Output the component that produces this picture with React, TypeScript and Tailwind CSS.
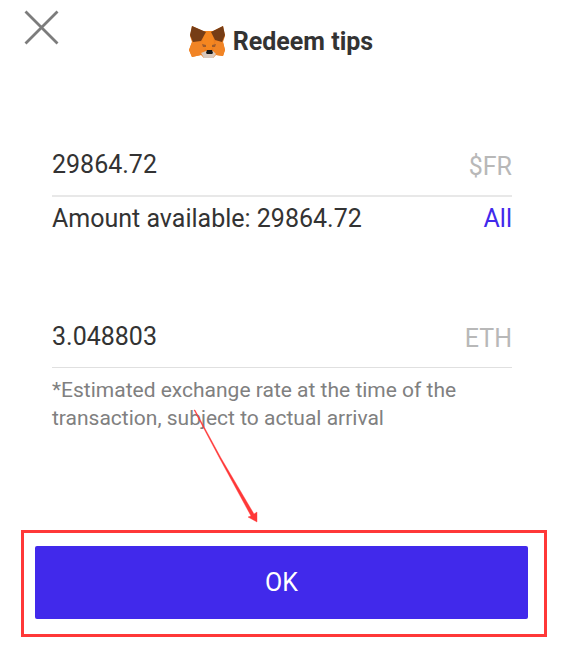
import { useState } from "react";

function FoxLogo() {
  return (
    <svg viewBox="0 0 36 34" className="h-[34px] w-9 shrink-0" role="img" aria-label="Fox">
      <path d="M3 1 L14 6 H24 L34 1 L36 11 L34 17 L36 25 L34 31 L27 30 L24 33 H15 L12 30 L3 32 L0 25 L3 17 L1 11 Z" fill="#ee7d1c" />
      <path d="M14 6 H24 L25 20 L22 25 H18 L13 20 Z" fill="#f5861f" />
      <path d="M3 17 L12 15 L16 24 L12 30 L3 32 L0 25 Z" fill="#f18425" />
      <path d="M34 17 L27 15 L24 24 L27 30 L34 31 L36 25 Z" fill="#f18425" />
      <path d="M3 1 L17 7 L12 16 L4 17 L1 10 Z" fill="#763d16" />
      <path d="M34 1 L22 7 L26 15 L33 17 L36 10 Z" fill="#763d16" />
      <path d="M12 28 L17 26 H24 L27 29 L24 33 H15 Z" fill="#d9c8bc" />
      <path d="M13 19 L17 20 V22 L14 22 Z" fill="#a05c2c" />
      <path d="M27 19 L23 20 V22 L26 22 Z" fill="#a05c2c" />
      <path d="M18 25 H23 L24 28 L23 29 H18 L17 28 Z" fill="#161616" />
    </svg>
  );
}

type FieldProps = {
  id: string;
  label: string;
  unit: string;
  value: string;
  onChange: (value: string) => void;
};

function AmountField({ id, label, unit, value, onChange }: FieldProps) {
  return (
    <div className="flex h-14 items-center pb-1">
      <input
        id={id}
        aria-label={label}
        inputMode="decimal"
        value={value}
        onChange={(event) => onChange(event.target.value)}
        className="h-8 min-w-0 flex-1 bg-transparent text-[25px] text-[#333333] outline-none"
      />
      <label htmlFor={id} className="pt-1 text-[25px] leading-8 text-[#b8b8b8]">
        {unit}
      </label>
    </div>
  );
}

export default function App() {
  const available = "29864.72";
  const [amount, setAmount] = useState(available);
  const [received, setReceived] = useState("3.048803");

  return (
    <main className="w-full bg-white pb-7 font-[Roboto,sans-serif] text-[#333333]">
      <header className="relative flex h-[84px] items-center justify-center pr-0.5">
        <button type="button" aria-label="Close" className="absolute top-2 left-6 h-[38px] w-9">
          <svg viewBox="0 0 36 38" className="h-full w-full" fill="none" stroke="#7c7c7c" strokeWidth="2.8">
            <path d="M1.5 3.5 L33.5 35.5 M33.5 3.5 L1.5 35.5" />
          </svg>
        </button>
        <h1 className="flex items-center gap-2 text-[25px] leading-8 font-bold">
          <FoxLogo />
          Redeem tips
        </h1>
      </header>

      <section className="px-[52px] pt-[55px]">
        <div className="border-b-2 border-[#e8e8e8]">
          <AmountField id="redeem" label="Redeem amount" unit="$FR" value={amount} onChange={setAmount} />
        </div>
        <div className="flex items-center justify-between pt-1.5 text-[25px] leading-8">
          <p>Amount available: {available}</p>
          <button type="button" className="text-[#4129eb]" onClick={() => setAmount(available)}>
            All
          </button>
        </div>
      </section>

      <section className="px-[52px] pt-[76px]">
        <div className="border-b border-[#e0e0e0]">
          <AmountField id="receive" label="Amount received" unit="ETH" value={received} onChange={setReceived} />
        </div>
        <p className="pt-2 text-[21px] leading-7 text-[#808080]">
          *Estimated exchange rate at the time of the transaction, subject to actual arrival
        </p>
      </section>

      <div className="relative mr-9 ml-[35px] mt-[114px]">
        <button type="button" className="block h-[73px] w-full rounded-xs bg-[#4129eb] text-[25px] text-white">
          OK
        </button>
        <div className="pointer-events-none absolute -top-4 -right-[19px] -bottom-[18px] -left-[14px] border-3 border-[#ff3838]" />
        <svg viewBox="0 0 66 116" className="pointer-events-none absolute -top-[137px] left-[158px] h-[116px] w-[66px]">
          <path d="M1 1 L27 50 L58 107 L55 108 L64 113 L64 103 L61 105 L28 49 L2 1 Z" fill="#ff3838" stroke="#ff3838" strokeWidth="0.4" />
        </svg>
      </div>
    </main>
  );
}
